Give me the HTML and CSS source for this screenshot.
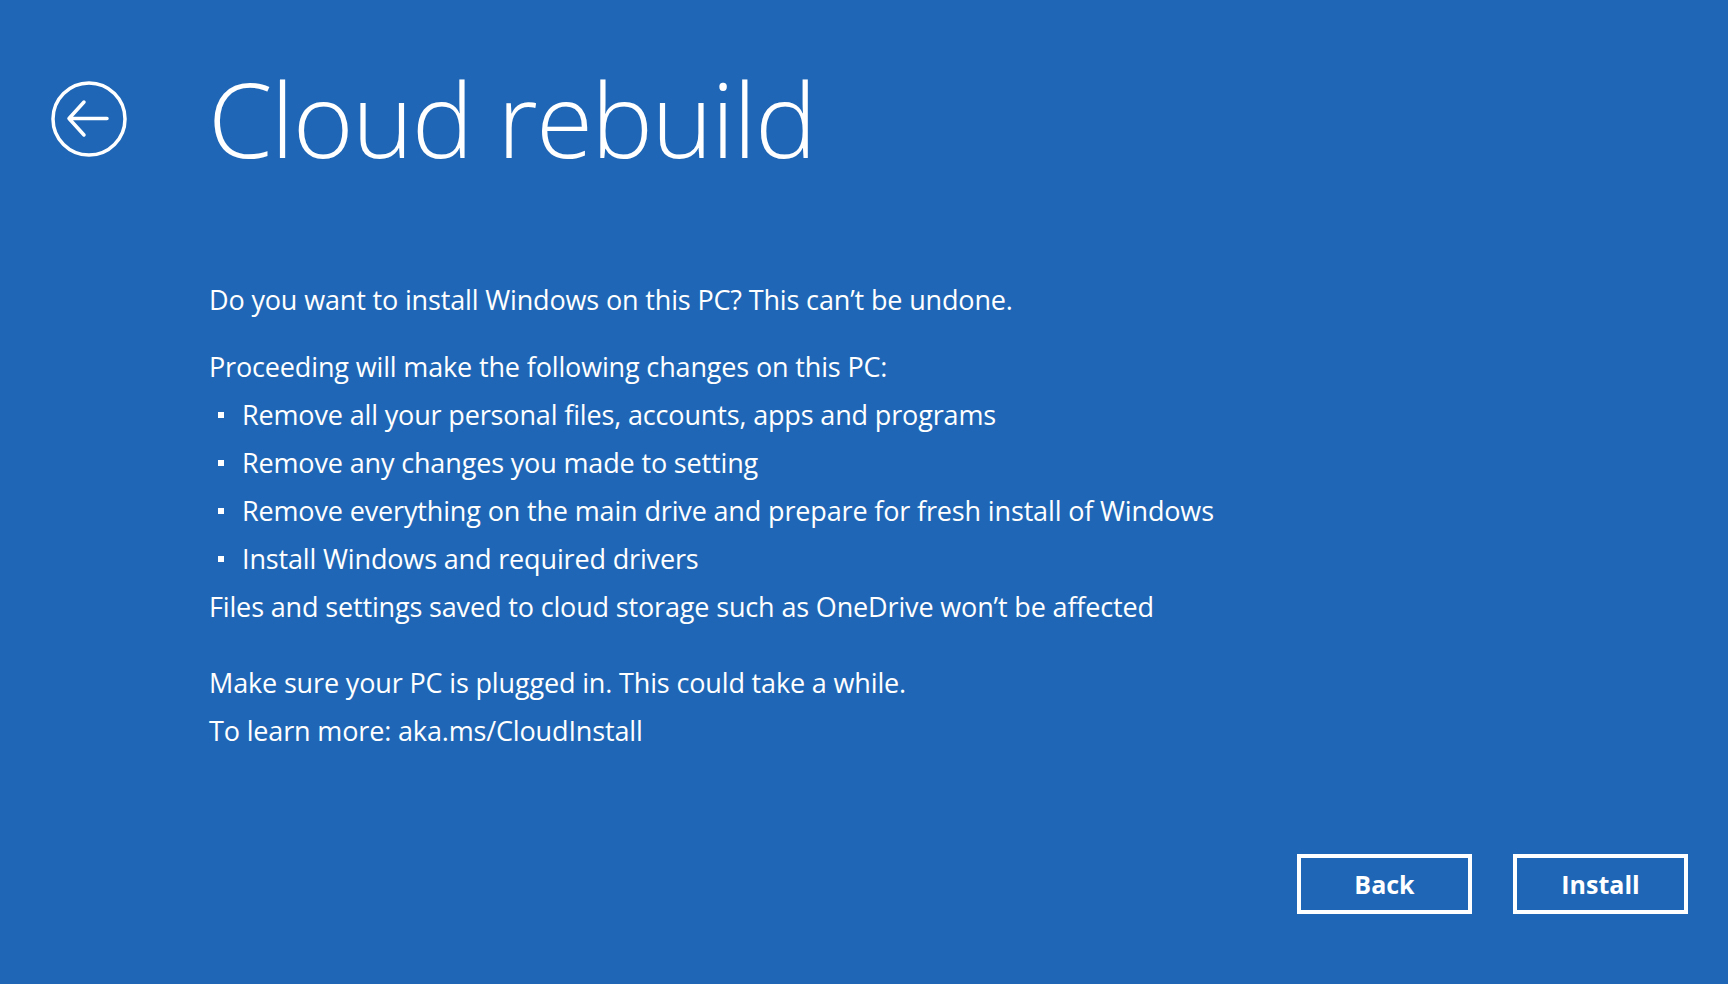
FILE: index.html
```html
<!DOCTYPE html>
<html lang="en">
<head>
<meta charset="utf-8">
<title>Cloud rebuild</title>
<link rel="stylesheet" href="styles.css">
</head>
<body>
<div class="screen">
  <header class="header">
    <button class="back-icon" aria-label="Back">
      <svg width="78" height="78" viewBox="0 0 78 78">
        <circle cx="39" cy="39" r="36" fill="none" stroke="#ffffff" stroke-width="3.5"/>
        <path d="M19 38.5 H57 M19 38.5 L34 22 M19 38.5 L34 55" fill="none" stroke="#ffffff" stroke-width="3.5" stroke-linecap="round" stroke-linejoin="round"/>
      </svg>
    </button>
    <h1 class="title">Cloud rebuild</h1>
  </header>
  <main class="content">
    <p class="line lead">Do you want to install Windows on this PC? This can’t be undone.</p>
    <p class="line">Proceeding will make the following changes on this PC:</p>
    <ul class="changes">
      <li class="line">Remove all your personal files, accounts, apps and programs</li>
      <li class="line">Remove any changes you made to setting</li>
      <li class="line">Remove everything on the main drive and prepare for fresh install of Windows</li>
      <li class="line">Install Windows and required drivers</li>
    </ul>
    <p class="line">Files and settings saved to cloud storage such as OneDrive won’t be affected</p>
    <p class="line spaced">Make sure your PC is plugged in. This could take a while.</p>
    <p class="line">To learn more: aka.ms/CloudInstall</p>
  </main>
  <footer class="actions">
    <button class="btn">Back</button>
    <button class="btn">Install</button>
  </footer>
</div>
</body>
</html>
```
FILE: styles.css
```css
html, body {
  margin: 0;
  padding: 0;
  height: 100%;
}
body {
  background: #1f67b6;
  color: #ffffff;
  font-family: "Open Sans", "Noto Sans", sans-serif;
  overflow: hidden;
}
.screen {
  display: flex;
  flex-direction: column;
  height: 984px;
  box-sizing: border-box;
}
.header {
  display: flex;
  align-items: flex-start;
  padding-top: 66px;
  padding-left: 50px;
}
.back-icon {
  background: none;
  border: 0;
  padding: 0;
  margin-top: 14px;
  width: 78px;
  height: 78px;
  display: block;
  cursor: pointer;
}
.back-icon svg { display: block; }
.title {
  margin: 0 0 0 80px;
  font-weight: 300;
  font-size: 104px;
  line-height: 104px;
  letter-spacing: -1.7px;
}
.content {
  padding-left: 209px;
  margin-top: 106px;
}
.line {
  margin: 0;
  font-size: 27px;
  line-height: 48px;
  letter-spacing: -0.15px;
}
.lead {
  margin-bottom: 19px;
}
.changes {
  list-style: none;
  margin: 0;
  padding: 0;
}
.changes li {
  position: relative;
  padding-left: 33px;
}
.changes li::before {
  content: "";
  position: absolute;
  left: 9px;
  top: 21px;
  width: 6px;
  height: 6px;
  background: #ffffff;
}
.spaced {
  margin-top: 28px;
}
.actions {
  display: flex;
  justify-content: flex-end;
  gap: 41px;
  padding-right: 40px;
  margin-top: 99px;
}
.btn {
  width: 175px;
  height: 60px;
  box-sizing: border-box;
  background: transparent;
  border: 4px solid #ffffff;
  color: #ffffff;
  font-family: "Open Sans", "Noto Sans", sans-serif;
  font-weight: 700;
  font-size: 25px;
  padding: 0;
  cursor: pointer;
}
```
